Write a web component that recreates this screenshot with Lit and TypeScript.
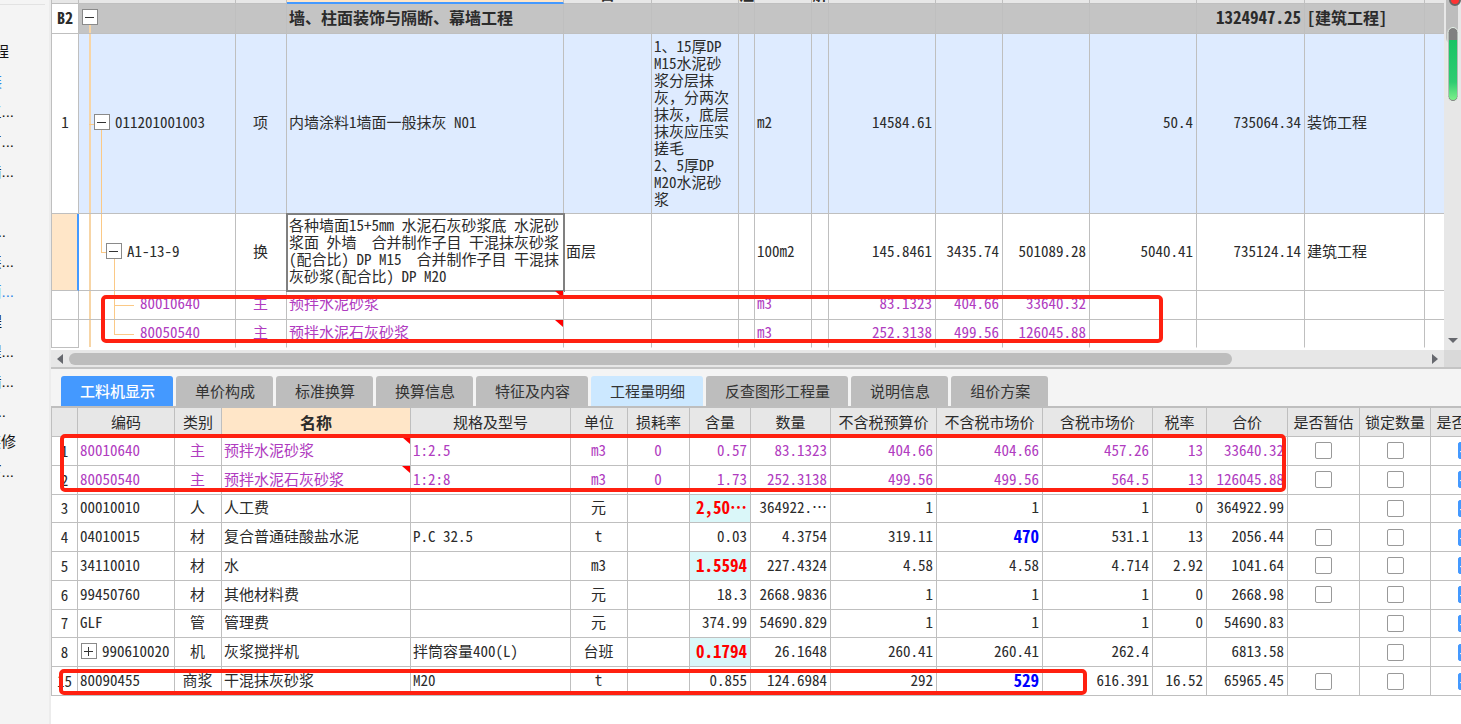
import { LitElement, html, css, nothing, TemplateResult } from "lit";
import { customElement, property } from "lit/decorators.js";
import { classMap } from "lit/directives/class-map.js";
import { styleMap } from "lit/directives/style-map.js";

const shared = css`
  * {
    box-sizing: border-box;
  }
  table {
    border-collapse: separate;
    border-spacing: 0;
    table-layout: fixed;
  }
  th,
  td {
    padding: 0 3px 2px 2px;
    border-right: 1px solid #bfbfbf;
    border-bottom: 1px solid #bfbfbf;
    font-weight: 400;
    text-align: left;
    white-space: pre;
    overflow: hidden;
    vertical-align: middle;
  }
  th:first-child,
  td:first-child {
    border-left: 1px solid #bfbfbf;
    text-align: center;
    padding: 0;
  }
  td.c {
    text-align: center;
  }
  td.r {
    text-align: right;
  }
  tr.main-material td:not(:first-child) {
    color: #b03cc0;
  }
  td.marked {
    position: relative;
  }
  td.marked::after {
    content: "";
    position: absolute;
    top: 0;
    right: 0;
    border-top: 7px solid #f00;
    border-left: 8px solid transparent;
  }
  .full {
    font-feature-settings: normal;
  }
  .toggle {
    flex: none;
    width: 16px;
    height: 16px;
    padding: 0;
    border: 1px solid #8a8a8a;
    background: #fff;
    display: grid;
    place-items: center;
    position: relative;
  }
  .toggle svg {
    display: block;
  }
  .callout {
    position: absolute;
    border: 4px solid #ff2010;
    border-radius: 5px;
    pointer-events: none;
  }
`;

const toggle = (open: boolean, name: string) => html`<button
  class="toggle"
  aria-label=${name}
  aria-expanded=${open ? "true" : "false"}
><svg width="10" height="10" viewBox="0 0 10 10" stroke="#333" stroke-width="1"><path
  d=${open ? "M0 5.5H9" : "M0 5.5H9M4.5 1V10"}
/></svg></button>`;

interface NavItem {
  text: string;
  edge: number;
  blue?: boolean;
}

const NAV: NavItem[] = [
  { text: "程", edge: 9 },
  { text: "装", edge: 2, blue: true },
  { text: "工...", edge: 14 },
  { text: "有...", edge: 14 },
  { text: "墙...", edge: 14 },
  { text: "", edge: 0 },
  { text: "..", edge: 6 },
  { text: "装...", edge: 14 },
  { text: "面...", edge: 14, blue: true },
  { text: "程", edge: 2 },
  { text: "程...", edge: 14 },
  { text: "墙...", edge: 14 },
  { text: "..", edge: 6 },
  { text: "装修", edge: 16 },
  { text: "下...", edge: 14 },
];

@customElement("side-nav")
class SideNav extends LitElement {
  static styles = css`
    :host {
      display: block;
      background: #f4f4f4;
      border-right: 2px solid #ececec;
      overflow: hidden;
    }
    ul {
      list-style: none;
      margin: 4px 4px 0 0;
      padding: 32px 0 0;
      border-top: 1px solid #e2e2e2;
    }
    li {
      display: flex;
      justify-content: flex-end;
      height: 30px;
      overflow: hidden;
      white-space: nowrap;
      font: 15px/30px "Liberation Sans", "Noto Sans CJK SC", sans-serif;
      color: #111;
    }
    .blue {
      color: #2f86e8;
    }
  `;

  render() {
    return html`<ul>
      ${NAV.map(
        (n) => html`<li class=${classMap({ blue: !!n.blue })} style=${styleMap({ width: `${n.edge}px` })}>
          <span>${n.text}</span>
        </li>`
      )}
    </ul>`;
  }
}

const TOP_COLS = [28, 157, 51, 277, 88, 87, 16, 57, 17, 107, 67, 87, 107, 108, 120];

const FEATURES = "1、15厚DP\nM15水泥砂\n浆分层抹\n灰，分两次\n抹灰，底层\n抹灰应压实\n搓毛\n2、5厚DP\nM20水泥砂\n浆";

const QUOTA_NAME =
  "各种墙面15+5mm 水泥石灰砂浆底 水泥砂\n浆面 外墙  合并制作子目 干混抹灰砂浆\n(配合比) DP M15  合并制作子目 干混抹\n灰砂浆(配合比) DP M20";

// The half-width feature also narrows the Chinese comma, which has to keep its full cell.
const withFullCommas = (text: string) =>
  text.split("，").map((s, i) => (i ? html`<span class="full">，</span>${s}` : s));

@customElement("bill-grid")
class BillGrid extends LitElement {
  static styles = [
    shared,
    css`
      :host {
        display: flex;
        position: relative;
      }
      .view {
        flex: 1;
        min-width: 0;
        overflow: hidden;
        padding-bottom: 2px;
      }
      table {
        width: 100%;
      }
      th {
        height: 4px;
        padding: 0;
        background: #e7e7e7;
      }
      th.sel {
        background: #ffe6c8;
        border-bottom: 2px solid #4499ff;
      }
      th div {
        display: flex;
        align-items: flex-end;
        justify-content: center;
        height: 3px;
        overflow: hidden;
        line-height: 18px;
        font-weight: 700;
      }
      .sel div {
        height: 2px;
      }
      .section td {
        height: 30px;
        padding-bottom: 4px;
        background: #c4c4c4;
        font-weight: 700;
        font-size: 16px;
      }
      .section td:first-child {
        background: #fff;
      }
      .section td.r {
        font-size: 17px;
      }
      .item td {
        height: 180px;
        padding-bottom: 4px;
        background: #deebff;
      }
      .item td:first-child {
        background: #fff;
      }
      .quota td {
        height: 77px;
      }
      .quota td:first-child {
        background: #ffe6c8;
        border-right: 2px solid #4499ff;
      }
      td.wrap {
        padding-bottom: 4px;
        line-height: 17px;
      }
      .quota td.editing {
        outline: 2px solid #808080;
        outline-offset: -1px;
      }
      .part td {
        height: 29px;
        padding-bottom: 4px;
      }
      .last td {
        height: 28px;
      }
      .last td:not(:first-child) {
        border-bottom-color: transparent;
      }
      td:last-child,
      th:last-child {
        border-right: 0;
      }
      td.tree {
        position: relative;
        padding-left: 0;
        padding-right: 0;
        white-space: normal;
      }
      .node {
        display: flex;
        align-items: center;
        gap: 5px;
        white-space: nowrap;
      }
      .d0 {
        padding-left: 3px;
      }
      .d1 {
        padding-left: 15px;
      }
      .d2 {
        padding-left: 27px;
      }
      .d3 {
        padding-left: 61px;
      }
      .guide {
        position: absolute;
        top: 0;
        bottom: -1px;
        border-left: 1px solid #fbc986;
      }
      .guide.g0 {
        border-left: 2px solid #f7d5a6;
      }
      .g0 {
        left: 10px;
      }
      .g1 {
        left: 22px;
      }
      .g2 {
        left: 35px;
      }
      .from {
        top: 50%;
      }
      .to {
        bottom: 50%;
      }
      .arm {
        position: absolute;
        top: 50%;
        width: 6px;
        border-top: 1px solid #fbc986;
      }
      .arm.g2 {
        width: 20px;
      }
      .vbar {
        flex: none;
        width: 17px;
        background: #e7e7e7;
        position: relative;
        overflow: hidden;
      }
      .vthumb {
        width: 12px;
        height: 44px;
        margin-left: 2px;
        border-radius: 0 0 6px 6px;
        background: #bdbdbd;
      }
      .vbar svg {
        position: absolute;
        right: 0;
      }
      .meter {
        top: 0;
      }
      .down {
        bottom: 4px;
      }
      .box {
        left: 50px;
        top: 295px;
        width: 1062px;
        height: 48px;
      }
    `,
  ];

  render() {
    const blank = (n: number) => Array.from({ length: n }, () => html`<td></td>`);
    const heads = ["", "", "", "", "目", "", "注", "", "解", "", "", "", "", "", "", ""];
    return html`
      <div class="view">
        <table>
          <colgroup>
            ${TOP_COLS.map((w) => html`<col style=${styleMap({ width: `${w}px` })} />`)}
            <col />
          </colgroup>
          <thead>
            <tr>
              ${heads.map((h, i) => html`<th class=${classMap({ sel: i === 3 })}><div>${h}</div></th>`)}
            </tr>
          </thead>
          <tbody>
            <tr class="section">
              <td>B2</td>
              <td class="tree">
                <span class="guide g0 from"></span>
                <div class="node d0">${toggle(true, "B2")}</div>
              </td>
              <td></td>
              <td>墙、柱面装饰与隔断、幕墙工程</td>
              ${blank(9)}
              <td class="r">1324947.25</td>
              <td>[建筑工程]</td>
              <td></td>
            </tr>
            <tr class="item">
              <td>1</td>
              <td class="tree">
                <span class="guide g0"></span><span class="arm g0"></span><span class="guide g1 from"></span>
                <div class="node d1">${toggle(true, "011201001003")}<span>011201001003</span></div>
              </td>
              <td class="c">项</td>
              <td>内墙涂料1墙面一般抹灰 N01</td>
              <td></td>
              <td class="wrap">${withFullCommas(FEATURES)}</td>
              <td></td>
              <td>m2</td>
              <td></td>
              <td class="r">14584.61</td>
              ${blank(2)}
              <td class="r">50.4</td>
              <td class="r">735064.34</td>
              <td>装饰工程</td>
              <td></td>
            </tr>
            <tr class="quota">
              <td></td>
              <td class="tree">
                <span class="guide g0"></span><span class="guide g1 to"></span><span class="arm g1"></span>
                <span class="guide g2 from"></span>
                <div class="node d2">${toggle(true, "A1-13-9")}<span>A1-13-9</span></div>
              </td>
              <td class="c">换</td>
              <td class="wrap editing">${QUOTA_NAME}</td>
              <td>面层</td>
              ${blank(2)}
              <td>100m2</td>
              <td></td>
              <td class="r">145.8461</td>
              <td class="r">3435.74</td>
              <td class="r">501089.28</td>
              <td class="r">5040.41</td>
              <td class="r">735124.14</td>
              <td>建筑工程</td>
              <td></td>
            </tr>
            ${this.part("80010640", "预拌水泥砂浆", "83.1323", "404.66", "33640.32", false)}
            ${this.part("80050540", "预拌水泥石灰砂浆", "252.3138", "499.56", "126045.88", true)}
          </tbody>
        </table>
      </div>
      <div class="vbar">
        <div class="vthumb"></div>
        <svg class="meter" width="17" height="110" viewBox="0 0 17 110">
          <defs>
            <linearGradient id="g" x1="0" y1="0" x2="0" y2="1">
              <stop offset="0" stop-color="#18c464" />
              <stop offset=".7" stop-color="#2ecc71" />
              <stop offset="1" stop-color="#7df08a" />
            </linearGradient>
          </defs>
          <circle cx="11" cy="0" r="5" fill="#f33" stroke="#666" stroke-width="2" />
          <rect x="4" y="27.5" width="10" height="74" rx="5" fill="#808080" stroke="#e8f3ea" />
          <path d="M5 40h8v56a4 4 0 0 1-8 0z" fill="url(#g)" />
        </svg>
        <svg class="down" width="17" height="10" viewBox="0 0 17 10"><path d="M4 2h10l-5 5z" fill="#66686e" /></svg>
      </div>
      <div class="callout box"></div>
    `;
  }

  private part(code: string, name: string, qty: string, price: string, total: string, last: boolean) {
    return html`<tr class=${classMap({ part: true, "main-material": true, last })}>
      <td></td>
      <td class="tree">
        <span class="guide g0"></span><span class=${classMap({ guide: true, g2: true, to: last })}></span>
        <span class="arm g2"></span>
        <div class="node d3"><span>${code}</span></div>
      </td>
      <td class="c">主</td>
      <td class="marked">${name}</td>
      <td></td>
      <td></td>
      <td></td>
      <td>m3</td>
      <td></td>
      <td class="r">${qty}</td>
      <td class="r">${price}</td>
      <td class="r">${total}</td>
      <td></td>
      <td></td>
      <td></td>
      <td></td>
    </tr>`;
  }
}

const LOW_COLS = [27, 97, 47, 189, 160, 57, 62, 61, 80, 106, 106, 110, 54, 81, 72, 71, 72];
const LOW_HEADS = [
  "", "编码", "类别", "名称", "规格及型号", "单位", "损耗率", "含量", "数量", "不含税预算价",
  "不含税市场价", "含税市场价", "税率", "合价", "是否暂估", "锁定数量", "是否计价",
];

interface Row {
  v: string[];
  main?: boolean;
  estimate?: boolean;
  changed?: boolean;
  priced?: boolean;
  children?: boolean;
}

const ROWS: Row[] = [
  { v: ["1", "80010640", "主", "预拌水泥砂浆", "1:2.5", "m3", "0", "0.57", "83.1323", "404.66", "404.66", "457.26", "13", "33640.32"], main: true, estimate: true },
  { v: ["2", "80050540", "主", "预拌水泥石灰砂浆", "1:2:8", "m3", "0", "1.73", "252.3138", "499.56", "499.56", "564.5", "13", "126045.88"], main: true, estimate: true },
  { v: ["3", "00010010", "人", "人工费", "", "元", "", "2,50…", "364922.…", "1", "1", "1", "0", "364922.99"], changed: true },
  { v: ["4", "04010015", "材", "复合普通硅酸盐水泥", "P.C 32.5", "t", "", "0.03", "4.3754", "319.11", "470", "531.1", "13", "2056.44"], estimate: true, priced: true },
  { v: ["5", "34110010", "材", "水", "", "m3", "", "1.5594", "227.4324", "4.58", "4.58", "4.714", "2.92", "1041.64"], estimate: true, changed: true },
  { v: ["6", "99450760", "材", "其他材料费", "", "元", "", "18.3", "2668.9836", "1", "1", "1", "0", "2668.98"], estimate: true },
  { v: ["7", "GLF", "管", "管理费", "", "元", "", "374.99", "54690.829", "1", "1", "1", "0", "54690.83"] },
  { v: ["8", "990610020", "机", "灰浆搅拌机", "拌筒容量400(L)", "台班", "", "0.1794", "26.1648", "260.41", "260.41", "262.4", "", "6813.58"], changed: true, children: true },
  { v: ["15", "80090455", "商浆", "干混抹灰砂浆", "M20", "t", "", "0.855", "124.6984", "292", "529", "616.391", "16.52", "65965.45"], estimate: true, priced: true },
];

@customElement("resource-grid")
class ResourceGrid extends LitElement {
  static styles = [
    shared,
    css`
      :host {
        display: block;
        position: relative;
        overflow: hidden;
        background: #fff;
      }
      table {
        width: 1452px;
        height: 288px;
      }
      th {
        height: 29px;
        background: #e7e7e7;
        text-align: center;
        padding: 0;
      }
      th.sel {
        background: #ffe6c8;
        font-weight: 700;
        font-size: 16px;
      }
      td {
        height: 28px;
      }
      td.changed {
        background: #daf7f9;
        color: #f00;
        font-weight: 700;
        font-size: 17px;
      }
      td.priced {
        color: #00f;
        font-weight: 700;
        font-size: 17px;
      }
      td.tick {
        padding: 0;
      }
      .node {
        display: flex;
        align-items: center;
        gap: 5px;
        padding-left: 1px;
      }
      input {
        appearance: none;
        display: block;
        position: relative;
        width: 17px;
        height: 17px;
        margin: 0 auto;
        border: 1px solid #999;
        border-radius: 2px;
        background: #fff;
      }
      input:checked {
        border-color: #4499ff;
        background: #4499ff;
      }
      input:checked::before {
        content: "";
        position: absolute;
        left: 4px;
        top: 1px;
        width: 6px;
        height: 10px;
        border: solid #fff;
        border-width: 0 2px 2px 0;
        rotate: 45deg;
      }
      .pair {
        left: 9px;
        top: 26px;
        width: 1226px;
        height: 58px;
      }
      .single {
        left: 8px;
        top: 261px;
        width: 1028px;
        height: 26px;
      }
    `,
  ];

  render() {
    return html`
      <table>
        <colgroup>
          ${LOW_COLS.map((w) => html`<col style=${styleMap({ width: `${w}px` })} />`)}
        </colgroup>
        <thead>
          <tr>
            ${LOW_HEADS.map((h, i) => html`<th scope="col" class=${classMap({ sel: i === 3 })}>${h}</th>`)}
          </tr>
        </thead>
        <tbody>
          ${ROWS.map((r) => this.row(r))}
        </tbody>
      </table>
      <div class="callout pair"></div>
      <div class="callout single"></div>
    `;
  }

  private row(r: Row): TemplateResult {
    const tick = (label: string, on: boolean) =>
      html`<input type="checkbox" aria-label=${`${r.v[3]} ${label}`} .checked=${on} />`;
    return html`<tr class=${classMap({ "main-material": !!r.main })}>
      ${r.v.map((t, i) => {
        const cls = {
          c: i === 2 || i === 5 || i === 6,
          r: i > 6,
          marked: i === 3 && !!r.main,
          changed: i === 7 && !!r.changed,
          priced: i === 10 && !!r.priced,
        };
        const body = i === 1 && r.children ? html`<div class="node">${toggle(false, t)}<span>${t}</span></div>` : t;
        return html`<td class=${classMap(cls)}>${body}</td>`;
      })}
      <td class="tick">${r.estimate ? tick("是否暂估", false) : nothing}</td>
      <td class="tick">${tick("锁定数量", false)}</td>
      <td class="tick">${tick("是否计价", true)}</td>
    </tr>`;
  }
}

const TABS = ["工料机显示", "单价构成", "标准换算", "换算信息", "特征及内容", "工程量明细", "反查图形工程量", "说明信息", "组价方案"];

@customElement("detail-tabs")
class DetailTabs extends LitElement {
  @property({ type: Number }) active = 0;
  @property({ type: Number }) hover = 5;

  static styles = css`
    :host {
      display: flex;
      gap: 3px;
      padding: 7px 10px 0;
      background: #f4f4f4;
      border-top: 2px solid #c4c4c4;
      border-bottom: 2px solid #bebebe;
    }
    button {
      height: 30px;
      margin: 0;
      padding: 0 18px 0 19px;
      border: 0;
      border-radius: 3px 3px 0 0;
      background: #bdbdbd;
      color: #333;
      font: inherit;
      white-space: nowrap;
    }
    .hover {
      background: #cce8ff;
    }
    .active {
      background: #4499ff;
      color: #fff;
      font-weight: 500;
    }
  `;

  render() {
    return TABS.map(
      (t, i) => html`<button
        class=${classMap({ active: i === this.active, hover: i === this.hover })}
        @click=${() => (this.active = i)}
      >${t}</button>`
    );
  }
}

@customElement("app-root")
class AppRoot extends LitElement {
  static styles = css`
    :host {
      display: grid;
      grid-template-columns: 51px minmax(0, 1fr);
      min-height: 100vh;
      background: #fff;
      color: #2b2b2b;
      font: 15px/18px "Noto Sans CJK SC", sans-serif;
      font-feature-settings: "hwid" 1;
    }
    main {
      display: flex;
      flex-direction: column;
      min-width: 0;
    }
    .hscroll {
      display: flex;
      align-items: center;
      height: 17px;
      background: #e7e7e7;
    }
    .track {
      flex: 1;
      padding-right: 5px;
    }
    .thumb {
      width: 86%;
      height: 12px;
      border-radius: 6px;
      background: #bdbdbd;
    }
    .arrow {
      flex: none;
      margin: 0 6px;
    }
    .corner {
      align-self: stretch;
      width: 17px;
      background: #d9d9d9;
    }
    resource-grid {
      flex: 1;
    }
  `;

  render() {
    return html`
      <side-nav></side-nav>
      <main lang="zh-CN">
        <bill-grid></bill-grid>
        <div class="hscroll">
          <svg class="arrow" width="6" height="10" viewBox="0 0 6 10"><path d="M6 0v10L0 5z" fill="#66686e" /></svg>
          <div class="track"><div class="thumb"></div></div>
          <svg class="arrow" width="6" height="10" viewBox="0 0 6 10"><path d="M0 0v10l6-5z" fill="#66686e" /></svg>
          <div class="corner"></div>
        </div>
        <detail-tabs></detail-tabs>
        <resource-grid></resource-grid>
      </main>
    `;
  }
}
